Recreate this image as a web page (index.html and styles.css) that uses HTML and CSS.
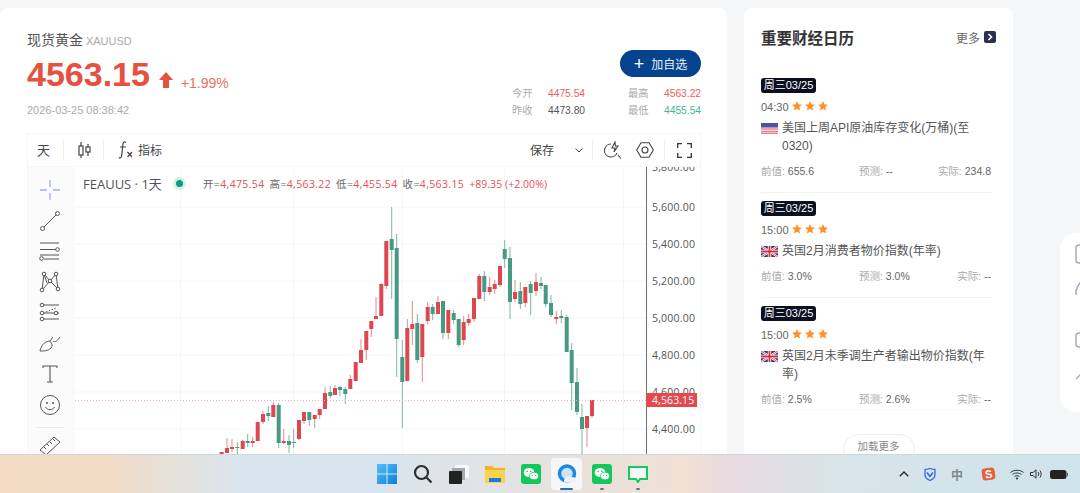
FILE: index.html
```html
<!DOCTYPE html>
<html lang="zh">
<head>
<meta charset="utf-8">
<title>现货黄金</title>
<link rel="stylesheet" href="styles.css">
</head>
<body>
<div class="page">
  <main class="main">
    <header class="head">
      <div class="quote">
        <div class="name">现货黄金 <span class="code">XAUUSD</span></div>
        <div class="priceline">
          <span class="price">4563.15</span>
          <svg class="arrow" width="14" height="16" viewBox="0 0 14 16"><path d="M7 0 14 8H10V16H4V8H0Z"/></svg>
          <span class="change">+1.99%</span>
        </div>
        <div class="date">2026-03-25 08:38:42</div>
      </div>
      <div class="side">
        <button class="add"><span class="plus">+</span>加自选</button>
        <div class="stats">
          <span class="k">今开</span><span class="v red">4475.54</span><span class="k">最高</span><span class="v red">4563.22</span>
          <span class="k">昨收</span><span class="v">4473.80</span><span class="k">最低</span><span class="v green">4455.54</span>
        </div>
      </div>
    </header>

    <section class="chart">
      <div class="toolbar">
        <span class="tb tb-day">天</span><i class="sep"></i>
        <span class="tb tb-candle"><svg width="13" height="18" viewBox="0 0 13 18"><g fill="none" stroke="#444" stroke-width="1.2"><path d="M3 1V17M10 3V15"/><rect x="1" y="5" width="4" height="9" fill="#fff"/><rect x="8" y="6" width="4" height="5" fill="#fff"/></g></svg></span><i class="sep"></i>
        <span class="tb tb-fx"><svg width="16" height="20" viewBox="0 0 16 20"><g fill="none" stroke="#444" stroke-width="1.2"><path d="M8 2.5C6 1 5 2.5 4.800 5L3.800 15C3.500 18 2 18.500 .8 17.500M2 7H8"/><path d="M9.500 12 14 17M14 12 9.500 17"/></g></svg></span>
        <span class="tb tb-ind">指标</span>
        <span class="tb tb-save">保存</span>
        <svg class="chev" width="8" height="5" viewBox="0 0 8 5"><path d="M.5.5 4 4 7.500.5" fill="none" stroke="#444"/></svg><i class="sep sep-a"></i>
        <svg class="tbi ti-alert" width="18" height="18" viewBox="0 0 18 18"><g fill="none" stroke="#444" stroke-width="1.100"><path d="M7 3A6.500 6.500 0 1 0 13 12"/><path d="M14 14 17 17.500"/><path d="M11 1 8 7H11L10 11 14 5H11.500Z"/></g></svg>
        <svg class="tbi ti-hex" width="18" height="16" viewBox="0 0 18 16"><g fill="none" stroke="#444" stroke-width="1.100"><path d="M5 .8H13L17.300 8 13 15.200H5L.7 8Z"/><circle cx="9" cy="8" r="3"/></g></svg><i class="sep sep-b"></i>
        <svg class="tbi ti-full" width="15" height="15" viewBox="0 0 15 15"><path d="M.7 5V.7H5M10 .7H14.300V5M14.300 10V14.300H10M5 14.300H.7V10" fill="none" stroke="#333" stroke-width="1.300"/></svg>
      </div>
      <div class="chartbody">
        <nav class="tools">
          <svg class="tool" width="22" height="22" viewBox="0 0 22 22"><path d="M11 1V8M11 14V21M1 11H8M14 11H21" stroke="#9db0e4" stroke-width="1.300"/></svg>
          <svg class="tool" width="22" height="22" viewBox="0 0 22 22"><g fill="none" stroke="#555"><path d="M5 17 17 5"/><circle cx="3.500" cy="18.500" r="2" fill="#fff"/><circle cx="18.500" cy="3.500" r="2" fill="#fff"/></g></svg>
          <svg class="tool" width="22" height="22" viewBox="0 0 22 22"><g fill="none" stroke="#555"><path d="M1 3H20M1 9.500H17M1 15H20M5 19H20"/><circle cx="18.500" cy="9.500" r="1.800" fill="#fff"/><circle cx="2.500" cy="18.500" r="1.800" fill="#fff"/></g></svg>
          <svg class="tool" width="22" height="22" viewBox="0 0 22 22"><g fill="none" stroke="#555"><path d="M5 3 3 19M17 3 19 18M5 3 11 10 19 18M17 3 11 10 3 19M5 3 8 12"/><circle cx="5" cy="3" r="1.800" fill="#fff"/><circle cx="17" cy="3" r="1.800" fill="#fff"/><circle cx="11" cy="10" r="1.800" fill="#fff"/><circle cx="3" cy="19" r="1.800" fill="#fff"/><circle cx="19" cy="18" r="1.800" fill="#fff"/></g></svg>
          <svg class="tool" width="22" height="22" viewBox="0 0 22 22"><g fill="none" stroke="#555"><path d="M4 3H20M4 11H20M4 17H20"/><path d="M7 10 17 6" stroke-dasharray="1.500 1.500"/><circle cx="3" cy="3" r="1.800" fill="#fff"/><circle cx="3" cy="11" r="1.800" fill="#fff"/><circle cx="17" cy="11" r="1.800" fill="#fff"/><circle cx="3" cy="17" r="1.800" fill="#fff"/></g></svg>
          <svg class="tool" width="22" height="22" viewBox="0 0 22 22"><g fill="none" stroke="#555"><path d="M1 19C2 14 5 10 10 9 13 10 14 14 12 16 9 19 5 19 1 19Z"/><path d="M14 9C16 11 19 8 21 5"/><path d="M11 9 14 5"/></g></svg>
          <svg class="tool" width="22" height="22" viewBox="0 0 22 22"><path d="M4 5V3H18V5M11 3V19M8 19H14" fill="none" stroke="#555" stroke-width="1.100"/></svg>
          <svg class="tool" width="22" height="22" viewBox="0 0 22 22"><g fill="none" stroke="#555"><circle cx="11" cy="11" r="9.500"/><path d="M6.500 13C8 16.500 14 16.500 15.500 13"/></g><circle cx="8" cy="9" r="1" fill="#555"/><circle cx="14" cy="9" r="1" fill="#555"/></svg>
          <i class="toolsep"></i>
          <svg class="tool" width="22" height="22" viewBox="0 0 22 22"><g fill="none" stroke="#555"><path d="M1 16 15 3 21 8 7 21Z"/><path d="M5 13 7 15M8 10 10 12M11 8 13 10M14 5 16 7"/></g></svg>
        </nav>
        <div class="canvas">
          <svg class="plot" width="626" height="288" viewBox="75 166 626 288">
            <path class="grid" d="M75 207H646M75 244H646M75 281H646M75 318H646M75 355H646M75 392H646M75 429H646M180.500 166V454M293.500 166V454M402.500 166V454M504.500 166V454M623.500 166V454"/>
            <path class="wick-r" d="M227 438V453M232 439V452M242.700 440V449M252.700 437V447M263 411V424M273.300 402V417M283.700 429V444M299 420V440M304 412V424M314.700 415V428M319.700 409V419M325 387V409M335 385V395M350.300 375V389M361 339V363M366.300 331V360M371.300 321V337M376 297V319M381.300 283V316M386.300 241V289M407.300 319V381M412.300 301V345M422.300 324V382M427.700 302V324M438 296V314M448.300 310V339M463.700 316V345M468.700 314V326M474 298V322M479.300 274V299M489.700 277V295M494.700 280V294M500 266V287M515 280V302M525.300 287V307M536 273V296M556.300 311V324M587 416V447M592 400V418"/>
            <path class="wick-g" d="M237.300 442V454M247.700 434V447M268.300 406V421M278.700 403V448M289 435V453M293.700 429V448M309.300 412V426M330.300 386V398M340 386V396M345.300 387V404M391.700 207V299M396.700 234V377M402.300 340V428M417.300 314V363M432.700 304V320M443 301V339M453.700 310V324M458.700 319V347M484.300 271V301M504.700 240V268M510 247V319M520.300 282V309M530.700 281V315M541 277V289M545.700 285V307M551 295V317M561.300 310V323M566.700 315V352M571.700 343V410M577 368V415M582 404V454"/>
            <path class="body-r" d="M221.700 452V454M227 448V453M232 447V449M242.700 441V449M252.700 441V443M257.700 422V441M263 414V422M273.300 405V417M283.700 441V443M299 420V439M304 412V421M314.700 415V419M319.700 409V415M325 393V409M335 388V395M350.300 379V389M355.700 362V381M361 350V363M366.300 331V350M371.300 321V329M376 316V319M381.300 284V316M386.300 241V286M407.300 328V381M412.300 324V329M422.300 324V357M427.700 307V321M438 302V314M448.300 310V333M463.700 322V340M468.700 319V323M474 298V319M479.300 276V299M489.700 287V292M494.700 284V289M500 266V285M515 292V299M525.300 287V303M536 282V291M556.300 317V319M587 416V428M592 400V416"/>
            <path class="body-g" d="M237.300 447V448M247.700 441V443M268.300 413V416M278.700 405V443M289 441V445M293.700 442V443M309.300 412V420M330.300 392V396M340 387V390M345.300 389V394M391.700 239V250M396.700 248V339M402.300 357V382M417.300 323V360M432.700 307V314M443 301V333M453.700 313V320M458.700 319V345M484.300 276V292M504.700 249V259M510 258V302M520.300 291V304M530.700 284V293M541 283V286M545.700 285V304M551 303V315M561.300 316V318M566.700 317V352M571.700 350V383M577 382V412M582 417V429"/>
            <path class="last" d="M75 400.500H646"/>
            <path class="axis" d="M646.500 166V454"/>
            <g class="labels">
              <text x="652" y="171">5,800.00</text>
              <text x="652" y="211">5,600.00</text>
              <text x="652" y="248">5,400.00</text>
              <text x="652" y="285">5,200.00</text>
              <text x="652" y="322">5,000.00</text>
              <text x="652" y="359">4,800.00</text>
              <text x="652" y="396">4,600.00</text>
              <text x="652" y="433">4,400.00</text>
            </g>
            <rect class="tag" x="646" y="393" width="51" height="14"/>
            <text class="tagtext" x="652" y="404">4,563.15</text>
          </svg>
          <div class="legend">
            <span class="sym">FEAUUS · 1天</span>
            <i class="dot"></i>
            <span class="ohlc">开=<b>4,475.54</b></span>
            <span class="ohlc">高=<b>4,563.22</b></span>
            <span class="ohlc">低=<b>4,455.54</b></span>
            <span class="ohlc">收=<b>4,563.15</b></span>
            <span class="ohlc ohlc-chg"><b>+89.35 (+2.00%)</b></span>
          </div>
        </div>
      </div>
    </section>
  </main>

  <aside class="cal">
    <div class="calhead">
      <h2>重要财经日历</h2>
      <span class="more">更多<svg width="12" height="12" viewBox="0 0 12 12"><rect width="12" height="12" rx="2" fill="#2b3050"/><path d="M4.500 3 7.500 6 4.500 9" fill="none" stroke="#fff" stroke-width="1.600"/></svg></span>
    </div>

    <article class="ev">
      <span class="tag-d">周三03/25</span>
      <div class="timeline"><span>04:30</span><svg class="stars" width="36" height="10" viewBox="0 0 36 10"><use href="#star"/><use href="#star" x="13"/><use href="#star" x="26"/></svg></div>
      <div class="evt">
        <svg class="flag" width="17" height="11" viewBox="0 0 17 11"><rect width="17" height="11" fill="#fff"/><path d="M0 1H17M0 3.500H17M0 6H17M0 8.500H17M0 10.500H17" stroke="#e8838a" stroke-width="1.300"/><rect width="17" height="4.500" fill="#4a55a0"/></svg>
        <p>美国上周API原油库存变化(万桶)(至0320)</p>
      </div>
      <div class="evs"><span class="c1"><em>前值:</em> 655.6</span><span class="c2"><em>预测:</em> --</span><span class="c3"><em>实际:</em> 234.8</span></div>
    </article>

    <article class="ev">
      <span class="tag-d">周三03/25</span>
      <div class="timeline"><span>15:00</span><svg class="stars" width="36" height="10" viewBox="0 0 36 10"><use href="#star"/><use href="#star" x="13"/><use href="#star" x="26"/></svg></div>
      <div class="evt">
        <svg class="flag" width="17" height="11" viewBox="0 0 17 11"><use href="#uk"/></svg>
        <p>英国2月消费者物价指数(年率)</p>
      </div>
      <div class="evs"><span class="c1"><em>前值:</em> 3.0%</span><span class="c2"><em>预测:</em> 3.0%</span><span class="c3"><em>实际:</em> --</span></div>
    </article>

    <article class="ev ev-last">
      <span class="tag-d">周三03/25</span>
      <div class="timeline"><span>15:00</span><svg class="stars" width="36" height="10" viewBox="0 0 36 10"><use href="#star"/><use href="#star" x="13"/><use href="#star" x="26"/></svg></div>
      <div class="evt">
        <svg class="flag" width="17" height="11" viewBox="0 0 17 11"><use href="#uk"/></svg>
        <p>英国2月未季调生产者输出物价指数(年率)</p>
      </div>
      <div class="evs"><span class="c1"><em>前值:</em> 2.5%</span><span class="c2"><em>预测:</em> 2.6%</span><span class="c3"><em>实际:</em> --</span></div>
    </article>
    <div class="moreline"><button class="load">加载更多</button></div>
  </aside>
</div>

<div class="float">
  <svg width="20" height="170" viewBox="0 0 20 170"><g fill="none" stroke="#a8adb5" stroke-width="1.500"><rect x="1" y="12" width="18" height="18" rx="3"/><path d="M1 58C3 50 8 46 14 44M1 56V62"/><rect x="1" y="100" width="18" height="14" rx="3"/><path d="M6 100V94H14"/><path d="M1 146 8 139 14 144"/></g></svg>
</div>

<footer class="taskbar">
  <div class="apps">
    <span class="app"><svg width="20" height="20" viewBox="0 0 20 20"><defs><linearGradient id="w" x1="0" y1="0" x2="1" y2="1"><stop offset="0" stop-color="#52c2f5"/><stop offset="1" stop-color="#0c7fdc"/></linearGradient></defs><path d="M0 0H9.500V9.500H0ZM10.500 0H20V9.500H10.500ZM0 10.500H9.500V20H0ZM10.500 10.500H20V20H10.500Z" fill="url(#w)"/></svg></span>
    <span class="app"><svg width="20" height="20" viewBox="0 0 20 20"><g fill="none" stroke="#2b2f33" stroke-width="2.200"><circle cx="8.500" cy="8.500" r="6.500"/><path d="M13.500 13.500 18.500 18.500"/></g></svg></span>
    <span class="app"><svg width="20" height="20" viewBox="0 0 20 20"><rect x="6" y="1" width="14" height="13" rx="1" fill="#f6f7f8"/><rect x="3" y="4" width="13" height="12" fill="#a8a8a8"/><rect y="7" width="13" height="13" rx="1" fill="#222"/></svg></span>
    <span class="app"><svg width="20" height="19" viewBox="0 0 20 19"><path d="M0 1H7L9 3H20V18H0Z" fill="#f0b429"/><rect y="5" width="20" height="13" fill="#fbd24e"/><rect x="4" y="13" width="12" height="4" fill="#1b7fd0"/></svg></span>
    <span class="app"><svg width="20" height="20" viewBox="0 0 20 20"><use href="#wx"/></svg></span>
    <span class="app app-on"><svg width="20" height="20" viewBox="0 0 20 20"><circle cx="10" cy="9.500" r="7.500" fill="#cfe3f7" stroke="#1f86e6" stroke-width="3.500"/><path d="M7 17C7 13 11 11 14 13 17 12.500 19 14 19 16 19 17.500 18 18.500 17 18.500H9C7.500 18.500 7 18 7 17Z" fill="#eef2f6"/></svg></span>
    <span class="app app-dot"><svg width="20" height="20" viewBox="0 0 20 20"><use href="#wx"/></svg></span>
    <span class="app app-dot"><svg width="20" height="18" viewBox="0 0 20 18"><path d="M1 2H19V14H12L10 17 8 14H1Z" fill="#f2fbf4" stroke="#17c964" stroke-width="2"/></svg></span>
  </div>
  <div class="tray">
    <span class="t t-chev"><svg width="10" height="6" viewBox="0 0 10 6"><path d="M.8 5.200 5 1 9.200 5.200" fill="none" stroke="#222" stroke-width="1.300"/></svg></span>
    <span class="t t-shield"><svg width="12" height="13" viewBox="0 0 12 13"><path d="M1 1.500C3 1.500 4.500 1 6 .5 7.500 1 9 1.500 11 1.500V6.500C11 9.500 8.500 11.500 6 12.500 3.500 11.500 1 9.500 1 6.500Z" fill="none" stroke="#3d68e8" stroke-width="1.300"/><path d="M3 4.500 6 8.500 9 4.500" fill="none" stroke="#3d68e8" stroke-width="1.600"/></svg></span>
    <span class="t t-zh">中</span>
    <span class="t t-s"><span class="sogou">S</span></span>
    <span class="t t-wifi"><svg width="14" height="11" viewBox="0 0 14 11"><g fill="none" stroke="#333"><path d="M.5 3.500C4 .5 10 .5 13.500 3.500M2.500 5.500C5 3.500 9 3.500 11.500 5.500M4.500 7.500C6 6.500 8 6.500 9.500 7.500"/></g><circle cx="7" cy="9.500" r="1.100" fill="#333"/></svg></span>
    <span class="t t-vol"><svg width="12" height="10" viewBox="0 0 12 10"><g fill="none" stroke="#333"><path d="M.5 3.500H3L6 .8V9.200L3 6.500H.5Z"/><path d="M8 3C9 4 9 6 8 7M10 1.500C11.500 3.500 11.500 6.500 10 8.500"/></g></svg></span>
    <span class="t t-bat"><svg width="18" height="9" viewBox="0 0 18 9"><rect width="16.500" height="9" rx="2.500" fill="#222"/><rect x="17" y="3" width="1" height="3" fill="#555"/></svg></span>
  </div>
</footer>

<svg class="defs" width="0" height="0">
  <defs>
    <path id="star" d="M5 0 6.400 3.300 10 3.700 7.300 6 8.100 9.600 5 7.700 1.900 9.600 2.700 6 0 3.700 3.600 3.300Z" fill="#ff9128"/>
    <g id="uk"><rect width="17" height="11" fill="#3a3a7c"/><path d="M0 0 17 11M17 0 0 11" stroke="#fff" stroke-width="2.200"/><path d="M0 0 17 11M17 0 0 11" stroke="#d0303f" stroke-width=".8"/><path d="M8.500 0V11M0 5.500H17" stroke="#fff" stroke-width="3.400"/><path d="M8.500 0V11M0 5.500H17" stroke="#d0303f" stroke-width="1.800"/></g>
    <g id="wx"><rect width="20" height="20" rx="3" fill="#12c75c"/><ellipse cx="8" cy="8.500" rx="5.300" ry="4.500" fill="#fff"/><ellipse cx="13" cy="12" rx="4.500" ry="3.700" fill="#fff" stroke="#12c75c" stroke-width=".7"/><circle cx="6.200" cy="7.500" r=".8" fill="#12c75c"/><circle cx="9.700" cy="7.500" r=".8" fill="#12c75c"/><circle cx="11.500" cy="11.500" r=".6" fill="#12c75c"/><circle cx="14.500" cy="11.500" r=".6" fill="#12c75c"/></g>
  </defs>
</svg>
</body>
</html>
```

FILE: styles.css
```css
* { box-sizing: border-box; }
html, body { margin: 0; height: 493px; overflow: hidden; }
body {
  position: relative;
  background: #f4f6f8;
  font-family: "Liberation Sans", "Noto Sans CJK SC", sans-serif;
  color: #555;
}
p, h2 { margin: 0; }
em { font-style: normal; }
button { font: inherit; border: 0; padding: 0; }

.page { display: flex; gap: 17px; padding-top: 8px; align-items: flex-start; }

/* quote card */
.main {
  width: 727px;
  height: 485px;
  background: #fff;
  border-radius: 8px;
  padding: 22px 26px 0 27px;
}
.head { display: flex; justify-content: space-between; height: 103px; }
.name { font-size: 14px; line-height: 20px; color: #555; }
.code { font-size: 11px; color: #aaa; margin-left: -1px; }
.priceline { display: flex; align-items: flex-end; height: 38px; margin-top: 4px; }
.price { font-size: 34px; line-height: 38px; font-weight: 700; color: #e5503f; }
.arrow { fill: #e5503f; margin: 0 0 5px 9px; }
.change { font-size: 14px; line-height: 20px; color: #e8705f; margin: 0 0 0 8px; }
.date { font-size: 11px; line-height: 14px; color: #aaa; margin-top: 10px; }

.side { display: flex; flex-direction: column; align-items: flex-end; padding-top: 20px; }
.add {
  width: 81px; height: 27px;
  border-radius: 14px;
  background: #05448c;
  color: #e6eef8;
  font-size: 12px;
  display: flex; align-items: center; justify-content: center;
}
.plus { font-size: 18px; line-height: 20px; margin-right: 7px; font-weight: 400; color: #fff; }
.stats {
  display: grid;
  grid-template-columns: 36px 80px 36px 37px;
  grid-auto-rows: 17px;
  margin-top: 8px;
  font-size: 10.250px;
  line-height: 17px;
  color: #555;
}
.k { color: #aaa; }
.v { white-space: nowrap; }
.red { color: #e8605a; }
.green { color: #45b78c; }

/* chart */
.chart { width: 674px; height: 322px; background: #f6f7f9; border: 1px solid #f5f6f7; border-bottom: 0; }
.toolbar { height: 32px; background: #fff; display: flex; align-items: center; font-size: 12px; color: #444; }
.tb { display: flex; align-items: center; }
.tb-day { font-size: 13px; margin-left: 9px; width: 26px; padding-bottom: 2px; }
.sep { width: 1px; height: 20px; background: #eee; flex: none; }
.tb-candle { margin-left: 14px; width: 25px; }
.tb-fx { margin-left: 14px; width: 20px; }
.tb-ind { font-size: 12px; padding-bottom: 2px; }
.tb-save { margin-left: auto; padding-bottom: 2px; }
.chev { margin-left: 21px; }
.sep-a { margin-left: 9px; }
.ti-alert { margin-left: 11px; }
.ti-hex { margin-left: 14px; }
.sep-b { margin-left: 10px; }
.ti-full { margin: 0 8px 0 12px; }

.chartbody { display: flex; height: 290px; margin-top: 1px; }
.tools {
  width: 47px; flex: none;
  background: #fbfbfc;
  display: flex; flex-direction: column; align-items: center;
  padding: 12px 3px 0 0;
  gap: 8.700px;
}
.tool { flex: none; }
.toolsep { width: 28px; height: 1px; background: #eaeaec; margin: 2px 0 -2px; flex: none; }
.canvas { position: relative; flex: 1; background: #fff; overflow: hidden; }
.plot { display: block; margin-top: -1px; }
.grid { stroke: #f6f6f8; fill: none; }
.wick-r { stroke: #e08a8e; fill: none; }
.wick-g { stroke: #7db5a6; fill: none; }
.body-r { stroke: #dd4850; stroke-width: 4; fill: none; }
.body-g { stroke: #469a83; stroke-width: 4; fill: none; }
.last { stroke: #eeb0b2; stroke-dasharray: 1 2; fill: none; }
.axis { stroke: #6a6d75; fill: none; }
.labels text { font-family: "Open Sans", sans-serif; font-size: 10.500px; letter-spacing: .2px; fill: #555; }
.tag { fill: #e5484e; }
.tagtext { font-family: "Open Sans", sans-serif; font-size: 10.500px; letter-spacing: .1px; fill: #fff; }

.legend {
  position: absolute;
  left: 8px; top: 7px;
  display: flex; align-items: center;
  white-space: nowrap;
  font-family: "Open Sans", "Noto Sans CJK SC", sans-serif;
  font-size: 10.500px;
  letter-spacing: .35px;
  color: #666;
}
.sym { font-size: 13px; letter-spacing: 0; color: #50535e; width: 93px; }
.dot {
  width: 7px; height: 7px; border-radius: 50%;
  background: #0d9e7a;
  box-shadow: 0 0 0 3px #d6f0e8;
  margin-right: 20px;
}
.ohlc { margin-right: 5px; }
.ohlc b { font-weight: 400; color: #e25058; }
.ohlc-chg b { letter-spacing: .05px; }

/* calendar */
.cal {
  width: 269px;
  height: 485px;
  background: #fff;
  border-radius: 8px;
  padding: 18px 17px 0 17px;
}
.calhead { display: flex; justify-content: space-between; align-items: center; height: 22px; margin-bottom: 30px; }
.calhead h2 { font-size: 15.500px; font-weight: 700; color: #333; }
.more { display: flex; align-items: center; gap: 4px; font-size: 12px; color: #666; }

.ev { border-bottom: 1px solid #f2f3f5; padding-bottom: 13px; margin: 0 4px 8px 0; }
.ev-last { padding-bottom: 2px; margin-bottom: 0; border-bottom-color: #f6f6f8; }
.tag-d {
  display: block;
  width: 55px; height: 15px;
  border-radius: 3px;
  background: #0b1020;
  color: #fff;
  font-size: 11px;
  line-height: 15px;
  text-align: center;
  white-space: nowrap;
}
.timeline { display: flex; align-items: center; gap: 3px; height: 15px; margin-top: 6px; font-size: 11px; color: #666; }
.stars { display: block; margin-top: -2px; }
.evt { display: flex; margin-top: 5px; }
.flag { flex: none; margin: 4px 4px 0 0; }
.evt p { font-size: 12px; line-height: 18px; color: #555; }
.evs { display: flex; height: 16px; margin-top: 8px; font-size: 10.500px; line-height: 16px; color: #666; }
.evs em { color: #aaa; }
.c1 { width: 98px; }
.c2 { flex: 1; }
.c3 { white-space: nowrap; padding-right: 1px; }
.moreline { display: flex; justify-content: center; margin-top: 24px; }
.load {
  width: 72px; height: 30px;
  background: #fff;
  border: 1px solid #eee;
  border-radius: 15px;
  font-size: 10.500px;
  line-height: 22px;
  padding-bottom: 8px;
  color: #888;
}

/* floating side panel */
.float {
  position: fixed;
  left: 1060px; top: 233px;
  width: 40px; height: 179px;
  background: #fff;
  border-radius: 16px 0 0 16px;
  padding: 0 0 0 15px;
}
.float svg { display: block; }

/* taskbar */
.taskbar {
  position: fixed;
  left: 0; right: 0; bottom: 0;
  height: 39px;
  display: flex; align-items: center;
  padding: 0 5px 0 369px;
  background: linear-gradient(90deg, #f3dcc3 0, #f2dcc6 110px, #d9e5ee 240px, #d8e4ee 370px, #f0e0d4 680px, #e9dbe0 730px, #d6e5ea 850px, #cfe3ea 1080px);
  border-top: 1px solid #cfd6dc;
}
.apps { display: flex; align-items: center; }
.app { width: 36px; height: 32px; display: flex; align-items: center; justify-content: center; border-radius: 4px; position: relative; flex: none; }
.app svg { display: block; }
.app-on { width: 31px; margin: 0 2px; background: #f4f6f8; }
.app-on::after { content: ""; position: absolute; left: 9px; bottom: 0; width: 13px; height: 2px; border-radius: 1px; background: #1f6fc4; }
.app-dot::after { content: ""; position: absolute; left: 16px; bottom: 0; width: 4px; height: 2px; border-radius: 1px; background: #6f7478; }
.tray { margin-left: auto; display: flex; align-items: center; height: 100%; }
.t { display: flex; align-items: center; justify-content: center; flex: none; }
.t-chev { width: 26px; }
.t-shield { width: 26px; }
.t-zh { width: 28px; font-size: 12px; color: #808a8c; font-weight: 700; }
.t-s { width: 34px; }
.sogou {
  width: 13px; height: 12px;
  border-radius: 3px;
  background: #e8603c;
  color: #fff;
  font-size: 11px;
  line-height: 12px;
  font-weight: 700;
  text-align: center;
  transform: rotate(-8deg);
}
.t-wifi { width: 24px; }
.t-vol { width: 14px; }
.t-bat { width: 32px; }
.defs { position: absolute; }
```
